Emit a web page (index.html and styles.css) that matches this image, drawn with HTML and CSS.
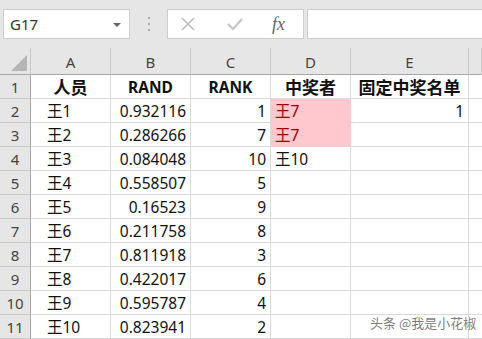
FILE: index.html
```html
<!DOCTYPE html>
<html lang="zh-CN">
<head>
  <meta charset="UTF-8" />
  <meta name="viewport" content="width=device-width, initial-scale=1.0"/>
  <title>中奖名单</title>
  <link rel="stylesheet" href="styles.css">
</head>
<body>
  <div class="topbar">
    <div class="namebox">
      <span>G17</span>
      <svg class="caret" width="8" height="4" viewBox="0 0 8 4"><path d="M0 0h8L4 4z" fill="#666"/></svg>
    </div>
    <div class="grip">
      <svg width="4" height="14" viewBox="0 0 4 14">
        <rect x="1" y="0" width="2" height="2" fill="#aaa"/>
        <rect x="1" y="6" width="2" height="2" fill="#aaa"/>
        <rect x="1" y="12" width="2" height="2" fill="#aaa"/>
      </svg>
    </div>
    <div class="fxbox">
      <svg width="16" height="16" viewBox="0 0 16 16"><path d="M2 2L14 14M14 2L2 14" stroke="#bdbdbd" stroke-width="1.6" fill="none"/></svg>
      <svg width="18" height="16" viewBox="0 0 18 16"><path d="M2 8L7 13L16 3" stroke="#c4c4c4" stroke-width="2.2" fill="none"/></svg>
      <span class="fx">fx</span>
    </div>
    <div class="formula"></div>
  </div>

  <div class="sheet" id="sheet">
    <div class="corner"><span class="tri"></span></div>
    <div class="colhead">A</div>
    <div class="colhead">B</div>
    <div class="colhead">C</div>
    <div class="colhead">D</div>
    <div class="colhead">E</div>
    <div class="colhead last"></div>
  </div>

  <div class="watermark">头条 @我是小花椒</div>

  <script>
    const rows = [
      ['王1', '0.932116', '1', '王7', '1'],
      ['王2', '0.286266', '7', '王7', ''],
      ['王3', '0.084048', '10', '王10', ''],
      ['王4', '0.558507', '5', '', ''],
      ['王5', '0.16523', '9', '', ''],
      ['王6', '0.211758', '8', '', ''],
      ['王7', '0.811918', '3', '', ''],
      ['王8', '0.422017', '6', '', ''],
      ['王9', '0.595787', '4', '', ''],
      ['王10', '0.823941', '2', '', '']
    ];
    const sheet = document.getElementById('sheet');

    function cell(text, cls) {
      const d = document.createElement('div');
      d.className = cls;
      d.textContent = text;
      sheet.appendChild(d);
    }

    // header row
    cell('1', 'rowhead');
    cell('人员', 'c title cjk');
    cell('RAND', 'c title');
    cell('RANK', 'c title');
    cell('中奖者', 'c title cjk');
    cell('固定中奖名单', 'c title cjk');
    cell('', 'c last');

    rows.forEach((r, i) => {
      cell(String(i + 2), 'rowhead');
      cell(r[0], 'c left indent');
      cell(r[1], 'c right');
      cell(r[2], 'c right');
      cell(r[3], 'c left' + (i < 2 ? ' hit' : ''));
      cell(r[4], 'c right');
      cell('', 'c last');
    });
  </script>
</body>
</html>
```

FILE: styles.css
```css
* {
  box-sizing: border-box;
}

body {
  margin: 0;
  width: 482px;
  height: 339px;
  overflow: hidden;
  background: #fff;
  font-family: "Noto Sans", "Noto Sans CJK SC", sans-serif;
  color: #111;
  position: relative;
}

.topbar {
  height: 48px;
  background: #e6e6e6;
  display: flex;
  align-items: flex-start;
  padding-top: 9px;
  padding-left: 3px;
}

.namebox {
  width: 127px;
  height: 30px;
  background: #fff;
  border: 1px solid #cdcdcd;
  display: flex;
  align-items: center;
  justify-content: space-between;
  padding: 0 8px 0 6px;
  font-size: 15px;
  color: #333;
}

.caret {
  margin-top: 1px;
}

.grip {
  width: 37px;
  height: 30px;
  display: flex;
  align-items: center;
  justify-content: center;
}

.fxbox {
  width: 137px;
  height: 30px;
  background: #fff;
  border: 1px solid #cdcdcd;
  display: flex;
  align-items: center;
  padding-left: 12px;
  gap: 30px;
}

.fx {
  font-family: "Liberation Serif", serif;
  font-style: italic;
  font-size: 18px;
  color: #666;
  margin-left: -2px;
}

.formula {
  flex: 1;
  height: 30px;
  margin-left: 3px;
  background: #fff;
  border: 1px solid #cdcdcd;
  border-right: none;
}

.sheet {
  display: grid;
  grid-template-columns: 31px 80px 80px 80px 80px 118px 1fr;
  grid-template-rows: 27px repeat(11, 24px);
  font-size: 15.5px;
}

.corner, .colhead {
  background: #e6e6e6;
  border-right: 1px solid #c8c8c8;
  border-bottom: 1px solid #a6a6a6;
}

.colhead {
  display: flex;
  align-items: center;
  justify-content: center;
  color: #444;
  font-size: 15px;
  padding-top: 1px;
}

.corner {
  position: relative;
}

.tri {
  position: absolute;
  right: 3px;
  bottom: 3px;
  width: 0;
  height: 0;
  border-left: 16px solid transparent;
  border-bottom: 16px solid #b5b5b5;
}

.rowhead {
  background: #e6e6e6;
  border-right: 1px solid #a6a6a6;
  border-bottom: 1px solid #c8c8c8;
  display: flex;
  align-items: center;
  justify-content: center;
  color: #444;
  font-size: 15px;
}

.c {
  border-right: 1px solid #d9d9d9;
  border-bottom: 1px solid #d9d9d9;
  display: flex;
  align-items: center;
  padding: 0 4px;
  white-space: nowrap;
}

.c.last {
  border-right: none;
}

.title {
  justify-content: center;
  font-weight: bold;
}

.cjk {
  font-size: 17px;
}

.left {
  justify-content: flex-start;
}

.indent {
  padding-left: 16px;
}

.right {
  justify-content: flex-end;
}

.hit {
  background: #ffc7ce;
  color: #9c0006;
  border-right-color: #ffc7ce;
  border-bottom-color: #ffc7ce;
}

.watermark {
  position: absolute;
  left: 370px;
  top: 313px;
  white-space: nowrap;
  font-family: "Noto Sans CJK SC", sans-serif;
  font-size: 13px;
  color: rgba(80, 80, 80, 0.75);
  text-shadow: 0 0 2px #fff, 0 0 2px #fff;
}
```
